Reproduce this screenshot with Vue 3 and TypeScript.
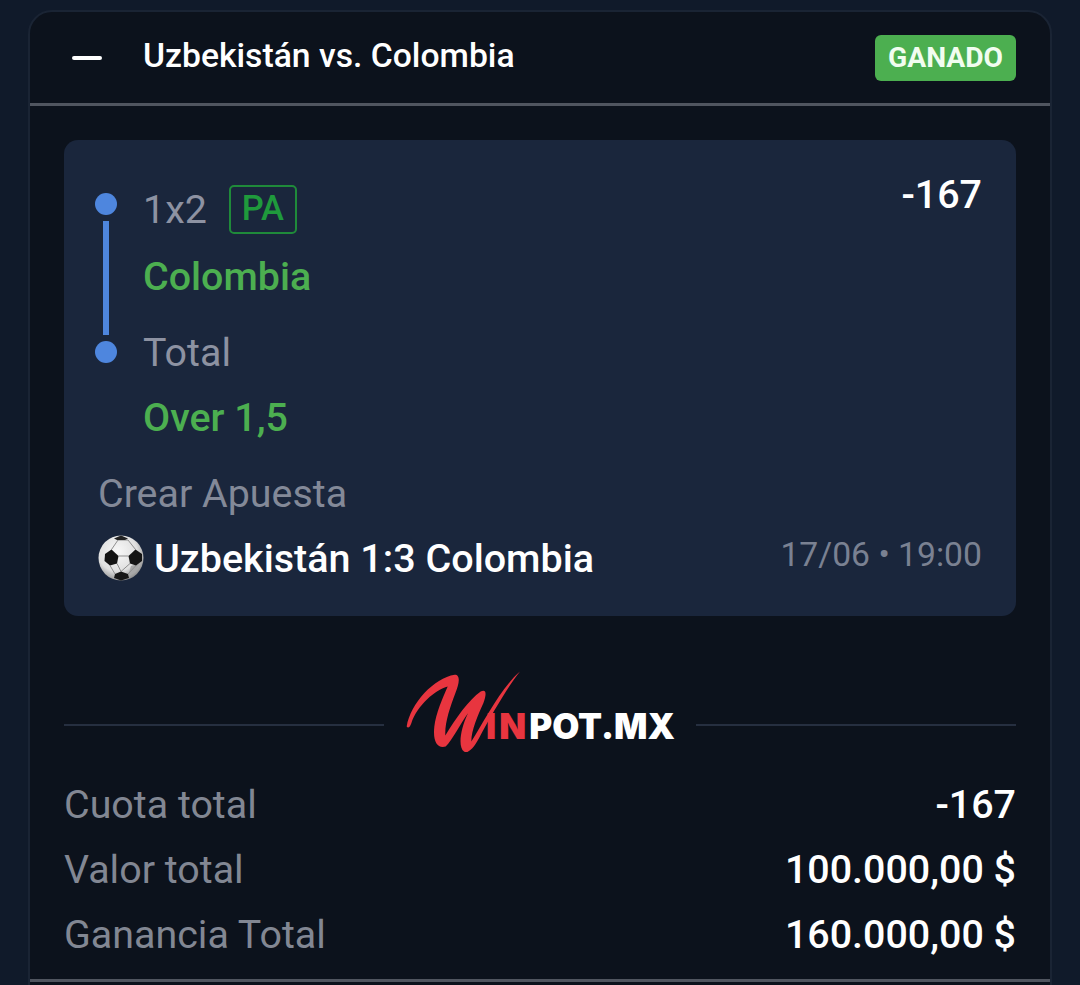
<script setup lang="ts">
const totals = [
  { label: 'Cuota total', value: '-167' },
  { label: 'Valor total', value: '100.000,00 $' },
  { label: 'Ganancia Total', value: '160.000,00 $' },
]
</script>

<template>
  <div class="page">
    <section class="ticket">
      <header class="ticket-head">
        <span class="collapse"></span>
        <h1 class="title">Uzbekistán vs. Colombia</h1>
        <span class="status">GANADO</span>
      </header>

      <div class="ticket-body">
        <div class="bet">
          <div class="bet-top">
            <div class="rail">
              <span class="dot"></span>
              <span class="rail-line"></span>
              <span class="dot"></span>
            </div>
            <div class="legs">
              <div class="market">
                <span>1x2</span>
                <span class="tag">PA</span>
              </div>
              <div class="pick pick--first">Colombia</div>
              <div class="market market--second">Total</div>
              <div class="pick">Over 1,5</div>
            </div>
            <div class="odds">-167</div>
          </div>
          <div class="bet-kind">Crear Apuesta</div>
          <div class="match">
            <svg class="ball" viewBox="0 0 46 46" aria-hidden="true">
              <defs>
                <radialGradient id="ballFill" cx="42%" cy="36%" r="70%">
                  <stop offset="0%" stop-color="#f8f8f8" />
                  <stop offset="62%" stop-color="#e0e0e0" />
                  <stop offset="100%" stop-color="#808080" />
                </radialGradient>
              </defs>
              <circle cx="23" cy="23" r="22.500" fill="url(#ballFill)" />
              <path d="M33 31 42 28 38 37 30 41Z" fill="#a8a8a8" />
              <path
                d="M13.500 14.500 20 5M37.500 14.500 30 5M20 5H30M20.500 21H30.500M19 28.500 23 36.500 32 28.500M12 30.500 17 39M38 30.500 30 39"
                fill="none"
                stroke="#8f8f8f"
                stroke-width="1"
              />
              <path d="M13.500 14.500 20.500 21 19 28.500 12 30.500 6.500 26 7 19Z" fill="#141414" />
              <path d="M37.500 14.500 44 19 44 26 38 30.500 32 28.500 30.500 21Z" fill="#141414" />
              <path d="M23 36.500 30 39 31 43 23 45.500 16 43 17 39Z" fill="#171717" />
              <path d="M16 3.500 23 .5 30 3.500 27 5 19 5Z" fill="#222" />
            </svg>
            <span class="match-name">Uzbekistán 1:3 Colombia</span>
            <span class="match-date">17/06 • 19:00</span>
          </div>
        </div>

        <div class="brand">
          <span class="brand-line"></span>
          <div class="logo">
            <svg class="logo-mark" viewBox="70 30 360 260" aria-hidden="true">
              <path
                d="M78 205C90 135 160 60 222 50C242 50 234 80 224 105C207 150 192 195 194 232C225 180 265 125 300 100C318 92 318 108 308 135C292 170 272 215 272 250C310 190 360 90 418 40C385 80 335 165 295 240C280 268 262 288 250 280C232 268 238 215 262 165C240 195 215 245 195 265C170 272 156 250 161 205C166 165 186 120 201 85C165 95 110 140 92 195C88 207 82 211 78 205Z"
                fill="#e8353f"
              />
            </svg>
            <span class="logo-text"><span class="logo-red">IN</span>POT.MX</span>
          </div>
          <span class="brand-line"></span>
        </div>

        <div class="totals">
          <div v-for="row in totals" :key="row.label" class="total-row">
            <span class="total-label">{{ row.label }}</span>
            <span class="total-value">{{ row.value }}</span>
          </div>
        </div>
      </div>

      <div class="ticket-foot"></div>
    </section>
  </div>
</template>

<style>
html,
body {
  margin: 0;
  background: #101a2a;
  overflow: hidden;
}
</style>

<style scoped>
.page {
  box-sizing: border-box;
  height: 985px;
  padding: 10px 28px 0;
  overflow: hidden;
  font-family: Roboto, "Liberation Sans", sans-serif;
}

.ticket {
  box-sizing: border-box;
  height: 1000px;
  border: 2px solid #1a2434;
  border-radius: 24px;
  background: #0c121c;
}

.ticket-head {
  display: flex;
  align-items: center;
  height: 91px;
  padding: 0 34px 0 42px;
  border-bottom: 3px solid #50555f;
}

.collapse {
  width: 30px;
  height: 4px;
  border-radius: 2px;
  background: #fff;
  margin-top: 1px;
}

.title {
  flex: 1;
  margin: 0 0 4px 41px;
  color: #fff;
  font-size: 33.700px;
  font-weight: 500;
  line-height: 48px;
}

.status {
  padding: 0 13px;
  border-radius: 6px;
  background: #4caf50;
  color: #f1fdf0;
  font-size: 28.200px;
  font-weight: 700;
  line-height: 46px;
}

.ticket-body {
  padding: 34px 34px 0;
}

.bet {
  padding: 30px 34px 34px 31px;
  border-radius: 14px;
  background: #1a263c;
}

.bet-top {
  display: flex;
  align-items: flex-start;
}

.rail {
  display: flex;
  flex-direction: column;
  align-items: center;
  gap: 6px;
  width: 22px;
  margin-top: 23px;
}

.dot {
  width: 22px;
  height: 22px;
  border-radius: 50%;
  background: #4e86de;
}

.rail-line {
  width: 6px;
  height: 114px;
  background: #4e86de;
}

.legs {
  flex: 1;
  margin-left: 26px;
  padding-top: 15px;
}

.market {
  display: flex;
  align-items: center;
  gap: 22px;
  height: 49px;
  color: #8d92a2;
  font-size: 39.400px;
}

.market--second {
  height: 48px;
  margin-top: 27px;
}

.tag {
  box-sizing: border-box;
  width: 68px;
  height: 49px;
  border: 2px solid #1f8a3a;
  border-radius: 5px;
  color: #1f9a3c;
  font-size: 34.500px;
  font-weight: 500;
  line-height: 43px;
  text-align: center;
}

.pick {
  margin-top: 18px;
  color: #4caf50;
  font-size: 39.400px;
  font-weight: 500;
  line-height: 48px;
}

.pick--first {
  margin-top: 19px;
}

.odds {
  margin-top: 1px;
  color: #fff;
  font-size: 39.400px;
  font-weight: 500;
  line-height: 48px;
}

.bet-kind {
  margin: 28px 0 0 3px;
  color: #838998;
  font-size: 39.400px;
  line-height: 48px;
}

.match {
  display: flex;
  align-items: center;
  height: 48px;
  margin: 16px 0 0 3px;
}

.ball {
  flex: none;
  width: 46px;
  height: 46px;
}

.match-name {
  flex: 1;
  margin-left: 10px;
  color: #fff;
  font-size: 39.500px;
  font-weight: 500;
}

.match-date {
  margin-bottom: 8px;
  color: #7a8192;
  font-size: 33.700px;
}

.brand {
  display: flex;
  align-items: center;
  height: 110px;
  margin-top: 54px;
}

.brand-line {
  flex: 1;
  height: 2px;
  background: #262f40;
}

.logo {
  position: relative;
  display: flex;
  justify-content: flex-end;
  align-items: center;
  width: 312px;
}

.logo-mark {
  position: absolute;
  left: 20px;
  top: -36px;
  width: 120px;
  height: 87px;
}

.logo-text {
  margin-right: 21px;
  padding-top: 2px;
  color: #fff;
  font-family: Inter, "Liberation Sans", sans-serif;
  font-size: 35px;
  font-weight: 900;
  line-height: 40px;
}

.logo-red {
  color: #e8353f;
  letter-spacing: 3px;
}

.totals {
  display: flex;
  flex-direction: column;
  gap: 17px;
  margin-top: 1px;
}

.total-row {
  display: flex;
  justify-content: space-between;
  line-height: 48px;
}

.total-label {
  color: #828793;
  font-size: 39.400px;
}

.total-value {
  color: #fff;
  font-size: 39.400px;
  font-weight: 500;
}

.ticket-foot {
  height: 3px;
  margin-top: 20px;
  background: #50555f;
}
</style>
